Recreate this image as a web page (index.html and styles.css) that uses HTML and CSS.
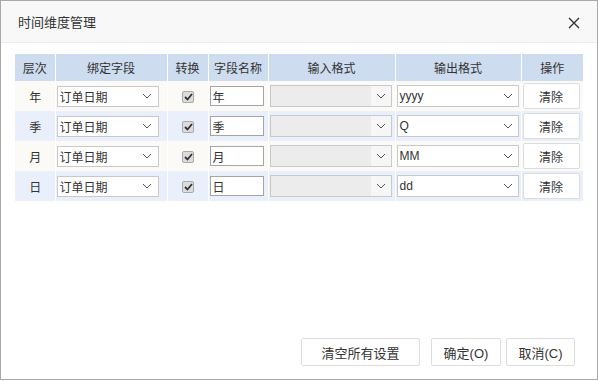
FILE: index.html
```html
<!DOCTYPE html>
<html lang="zh-CN">
<head>
  <meta charset="UTF-8">
  <title>时间维度管理</title>
  <link rel="stylesheet" href="styles.css">
</head>
<body>
  <div class="dialog">
    <div class="dialog-head">
      <span class="dialog-title">时间维度管理</span>
      <span class="dialog-close">
        <svg width="12" height="12" viewBox="0 0 12 12"><path d="M1 1L11 11M11 1L1 11" stroke="#333" stroke-width="1.4" fill="none"/></svg>
      </span>
    </div>
    <div class="dialog-body">
      <table class="grid">
        <colgroup>
          <col style="width:40px"><col style="width:112px"><col style="width:41px"><col style="width:60px">
          <col style="width:127px"><col style="width:126px"><col style="width:62px">
        </colgroup>
        <thead>
          <tr><th>层次</th><th>绑定字段</th><th>转换</th><th>字段名称</th><th>输入格式</th><th>输出格式</th><th>操作</th></tr>
        </thead>
        <tbody>
          <tr class="odd">
            <td class="level">年</td>
            <td><div class="sel sel-field"><span>订单日期</span><i class="arrow"><svg width="10" height="6" viewBox="0 0 10 6"><path d="M1 1L5 5L9 1" stroke="#555" fill="none"/></svg></i></div></td>
            <td class="center"><span class="check"><svg width="9" height="8" viewBox="0 0 9 8"><path d="M1 4L3.5 6.5L8 1" stroke="#333" stroke-width="1.8" fill="none"/></svg></span></td>
            <td><input class="name" type="text" value="年"></td>
            <td><div class="sel sel-fmt disabled"><span></span><i class="arrow"><svg width="10" height="6" viewBox="0 0 10 6"><path d="M1 1L5 5L9 1" stroke="#555" fill="none"/></svg></i></div></td>
            <td><div class="sel sel-fmt"><span>yyyy</span><i class="arrow"><svg width="10" height="6" viewBox="0 0 10 6"><path d="M1 1L5 5L9 1" stroke="#555" fill="none"/></svg></i></div></td>
            <td><button class="btn btn-clear">清除</button></td>
          </tr>
          <tr class="even">
            <td class="level">季</td>
            <td><div class="sel sel-field"><span>订单日期</span><i class="arrow"><svg width="10" height="6" viewBox="0 0 10 6"><path d="M1 1L5 5L9 1" stroke="#555" fill="none"/></svg></i></div></td>
            <td class="center"><span class="check"><svg width="9" height="8" viewBox="0 0 9 8"><path d="M1 4L3.5 6.5L8 1" stroke="#333" stroke-width="1.8" fill="none"/></svg></span></td>
            <td><input class="name" type="text" value="季"></td>
            <td><div class="sel sel-fmt disabled"><span></span><i class="arrow"><svg width="10" height="6" viewBox="0 0 10 6"><path d="M1 1L5 5L9 1" stroke="#555" fill="none"/></svg></i></div></td>
            <td><div class="sel sel-fmt"><span>Q</span><i class="arrow"><svg width="10" height="6" viewBox="0 0 10 6"><path d="M1 1L5 5L9 1" stroke="#555" fill="none"/></svg></i></div></td>
            <td><button class="btn btn-clear">清除</button></td>
          </tr>
          <tr class="odd">
            <td class="level">月</td>
            <td><div class="sel sel-field"><span>订单日期</span><i class="arrow"><svg width="10" height="6" viewBox="0 0 10 6"><path d="M1 1L5 5L9 1" stroke="#555" fill="none"/></svg></i></div></td>
            <td class="center"><span class="check"><svg width="9" height="8" viewBox="0 0 9 8"><path d="M1 4L3.5 6.5L8 1" stroke="#333" stroke-width="1.8" fill="none"/></svg></span></td>
            <td><input class="name" type="text" value="月"></td>
            <td><div class="sel sel-fmt disabled"><span></span><i class="arrow"><svg width="10" height="6" viewBox="0 0 10 6"><path d="M1 1L5 5L9 1" stroke="#555" fill="none"/></svg></i></div></td>
            <td><div class="sel sel-fmt"><span>MM</span><i class="arrow"><svg width="10" height="6" viewBox="0 0 10 6"><path d="M1 1L5 5L9 1" stroke="#555" fill="none"/></svg></i></div></td>
            <td><button class="btn btn-clear">清除</button></td>
          </tr>
          <tr class="even">
            <td class="level">日</td>
            <td><div class="sel sel-field"><span>订单日期</span><i class="arrow"><svg width="10" height="6" viewBox="0 0 10 6"><path d="M1 1L5 5L9 1" stroke="#555" fill="none"/></svg></i></div></td>
            <td class="center"><span class="check"><svg width="9" height="8" viewBox="0 0 9 8"><path d="M1 4L3.5 6.5L8 1" stroke="#333" stroke-width="1.8" fill="none"/></svg></span></td>
            <td><input class="name" type="text" value="日"></td>
            <td><div class="sel sel-fmt disabled"><span></span><i class="arrow"><svg width="10" height="6" viewBox="0 0 10 6"><path d="M1 1L5 5L9 1" stroke="#555" fill="none"/></svg></i></div></td>
            <td><div class="sel sel-fmt"><span>dd</span><i class="arrow"><svg width="10" height="6" viewBox="0 0 10 6"><path d="M1 1L5 5L9 1" stroke="#555" fill="none"/></svg></i></div></td>
            <td><button class="btn btn-clear">清除</button></td>
          </tr>
        </tbody>
      </table>
    </div>
    <div class="dialog-foot">
      <button class="btn btn-wide">清空所有设置</button>
      <button class="btn btn-ok">确定(O)</button>
      <button class="btn btn-cancel">取消(C)</button>
    </div>
  </div>
</body>
</html>
```
FILE: styles.css
```css
* {
  padding: 0;
  margin: 0;
  box-sizing: border-box;
}

body {
  font-family: "Liberation Sans", "Noto Sans CJK SC", sans-serif;
  font-size: 12px;
  color: #333;
  background: #fff;
}

.dialog {
  display: flex;
  flex-direction: column;
  width: 598px;
  height: 380px;
  border: 1px solid #a8a8a8;
  background: #fff;
}

.dialog-head {
  display: flex;
  align-items: center;
  justify-content: space-between;
  height: 42px;
  padding: 0 17px 0 17px;
  background: #f8f8f8;
  border-bottom: 1px solid #ececec;
}

.dialog-title {
  font-size: 13px;
  color: #333;
}

.dialog-close {
  display: flex;
  margin-top: 2px;
}

.dialog-body {
  flex: 1;
  padding: 11px 0 0 14px;
}

.grid {
  table-layout: fixed;
  width: 568px;
  border-collapse: collapse;
}

.grid th {
  height: 27px;
  font-weight: normal;
  font-size: 12px;
  color: #333;
  background: #cddcef;
  border-right: 1px solid #fff;
  text-align: center;
}

.grid td {
  height: 30px;
  padding: 0 0 0 1px;
  border-right: 1px solid #fff;
  vertical-align: middle;
}

.grid th:last-child,
.grid td:last-child {
  border-right: none;
}

.grid tr.odd td {
  background: #fbfaf6;
}

.grid tr.even td {
  background: #e9effb;
}

.grid td.level,
.grid td.center {
  text-align: center;
}

.sel {
  display: flex;
  align-items: center;
  justify-content: space-between;
  height: 21px;
  padding-left: 2px;
  border: 1px solid #c9c9c9;
  background: #fff;
  font-size: 12px;
  color: #333;
}

.sel .arrow {
  display: flex;
  align-items: center;
  justify-content: center;
  width: 17px;
  height: 100%;
}

.sel-field {
  width: 102px;
  height: 21px;
}

.sel-field .arrow {
  width: 22px;
}

.sel-fmt {
  width: 122px;
  height: 22px;
}

.sel-fmt .arrow {
  width: 20px;
}

.sel.disabled {
  background: #ececec;
}

.sel.disabled .arrow {
  background: #f6f6f6;
}

.check {
  display: inline-flex;
  align-items: center;
  justify-content: center;
  width: 12px;
  height: 12px;
  margin-top: 3px;
  border: 1px solid #a9a9a9;
  border-radius: 2px;
  background: #dcdcdc;
}

.name {
  display: block;
  width: 54px;
  height: 20px;
  padding-left: 2px;
  border: 1px solid #a5a5a5;
  font-family: "Liberation Sans", "Noto Sans CJK SC", sans-serif;
  font-size: 12px;
  color: #333;
  background: #fff;
  outline: none;
}

.btn {
  height: 27px;
  border: 1px solid #dcdcdc;
  border-radius: 2px;
  background: #fff;
  font-family: "Liberation Sans", "Noto Sans CJK SC", sans-serif;
  font-size: 12px;
  color: #333;
}

.btn-clear {
  display: block;
  width: 57px;
  height: 26px;
}

.dialog-foot {
  display: flex;
  justify-content: flex-end;
  padding: 0 22px 13px 0;
}

.btn-wide {
  width: 119px;
  height: 28px;
  font-size: 13px;
}

.btn-ok {
  width: 70px;
  height: 28px;
  margin-left: 11px;
  font-size: 13px;
}

.btn-cancel {
  width: 69px;
  height: 28px;
  margin-left: 5px;
  font-size: 13px;
}
```
